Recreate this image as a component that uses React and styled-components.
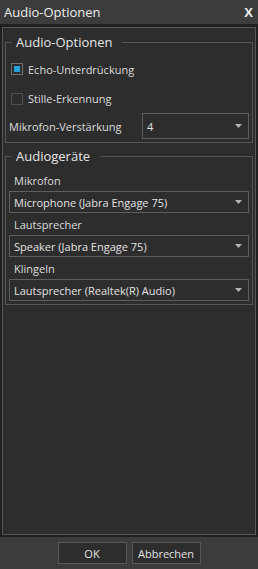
import React from "react";
import styled, { createGlobalStyle } from "styled-components";

const GlobalStyle = createGlobalStyle`
  html, body {
    margin: 0;
    padding: 0;
    background: #2b2b2b;
  }
  body {
    font-family: "Open Sans", "Noto Sans", sans-serif;
  }
`;

const Window = styled.div`
  width: 258px;
  height: 569px;
  display: flex;
  flex-direction: column;
  background: #202020;
  color: #dcdcdc;
  font-size: 11px;
`;

const TitleBar = styled.div`
  height: 24px;
  flex: none;
  display: flex;
  align-items: center;
  justify-content: space-between;
  padding: 0 5px 0 4px;
  background: #3c3c3c;
  margin-bottom: 3px;
`;

const Title = styled.span`
  font-size: 13px;
  color: #ececec;
`;

const Close = styled.span`
  font-size: 13px;
  font-weight: 700;
  color: #f0f0f0;
  font-family: "Liberation Sans", sans-serif;
`;

const Body = styled.div`
  flex: 1;
  margin: 0 2px 2px;
  border: 1px solid #575757;
  background: #2d2d2d;
  padding-top: 6px;
  display: flex;
  flex-direction: column;
  gap: 5px;
`;

const Group = styled.fieldset`
  margin: 0 2px;
  padding: 0 3px 3px;
  border: 1px solid #565656;
  min-width: 0;
`;

const Legend = styled.legend`
  margin-left: 3px;
  padding: 0 10px 0 4px;
  font-size: 13px;
  line-height: 16px;
  color: #e4e4e4;
`;

const Content = styled.div`
  display: flex;
  flex-direction: column;
  padding-top: ${(p) => p.$top}px;
`;

const CheckRow = styled.label`
  height: ${(p) => p.$h}px;
  display: flex;
  align-items: center;
  gap: 5px;
  padding-left: 2px;
`;

const Box = styled.span`
  width: 12px;
  height: 12px;
  box-sizing: border-box;
  border: 1px solid ${(p) => (p.$checked ? "#6e6e6e" : "#505050")};
  padding: 2px;
  display: flex;
  &::after {
    content: "";
    flex: 1;
    background: ${(p) => (p.$checked ? "#27a0de" : "transparent")};
  }
`;

const FieldRow = styled.div`
  display: flex;
  align-items: center;
  justify-content: space-between;
`;

const Label = styled.div`
  height: 22px;
  display: flex;
  align-items: center;
  padding-left: ${(p) => p.$indent || 0}px;
`;

const Select = styled.div`
  height: ${(p) => p.$h}px;
  width: ${(p) => (p.$w ? `${p.$w}px` : "auto")};
  box-sizing: border-box;
  border: 1px solid #5e5e5e;
  display: flex;
  align-items: center;
  justify-content: space-between;
  padding: 0 6px 0 4px;
  color: #e2e2e2;
`;

const Footer = styled.div`
  height: 32px;
  flex: none;
  background: #3c3c3c;
  display: flex;
  align-items: center;
  justify-content: center;
  gap: 5px;
`;

const Button = styled.button`
  width: 69px;
  height: 22px;
  background: #2d2d2d;
  border: 1px solid #595959;
  color: #e2e2e2;
  font-family: inherit;
  font-size: 11px;
  padding: 0;
`;

const Arrow = () => (
  <svg width="7" height="4" viewBox="0 0 7 4">
    <path d="M0 0H7L3.5 4Z" fill="#b4b4b4" />
  </svg>
);

const Combo = ({ value, h = 22, w }) => (
  <Select $h={h} $w={w}>
    <span>{value}</span>
    <Arrow />
  </Select>
);

const devices = [
  { label: "Mikrofon", value: "Microphone (Jabra Engage 75)" },
  { label: "Lautsprecher", value: "Speaker (Jabra Engage 75)" },
  { label: "Klingeln", value: "Lautsprecher (Realtek(R) Audio)" },
];

export default function App() {
  return (
    <>
      <GlobalStyle />
      <Window>
        <TitleBar>
          <Title>Audio-Optionen</Title>
          <Close>X</Close>
        </TitleBar>
        <Body>
          <Group>
            <Legend>Audio-Optionen</Legend>
            <Content $top={4}>
              <CheckRow $h={30}>
                <Box $checked />
                Echo-Unterdrückung
              </CheckRow>
              <CheckRow $h={29}>
                <Box />
                Stille-Erkennung
              </CheckRow>
              <FieldRow>
                <span>Mikrofon-Verstärkung</span>
                <Combo value="4" h={26} w={107} />
              </FieldRow>
            </Content>
          </Group>
          <Group>
            <Legend>Audiogeräte</Legend>
            <Content $top={5}>
              {devices.map((d) => (
                <React.Fragment key={d.label}>
                  <Label $indent={5}>{d.label}</Label>
                  <Combo value={d.value} />
                </React.Fragment>
              ))}
            </Content>
          </Group>
        </Body>
        <Footer>
          <Button>OK</Button>
          <Button>Abbrechen</Button>
        </Footer>
      </Window>
    </>
  );
}
